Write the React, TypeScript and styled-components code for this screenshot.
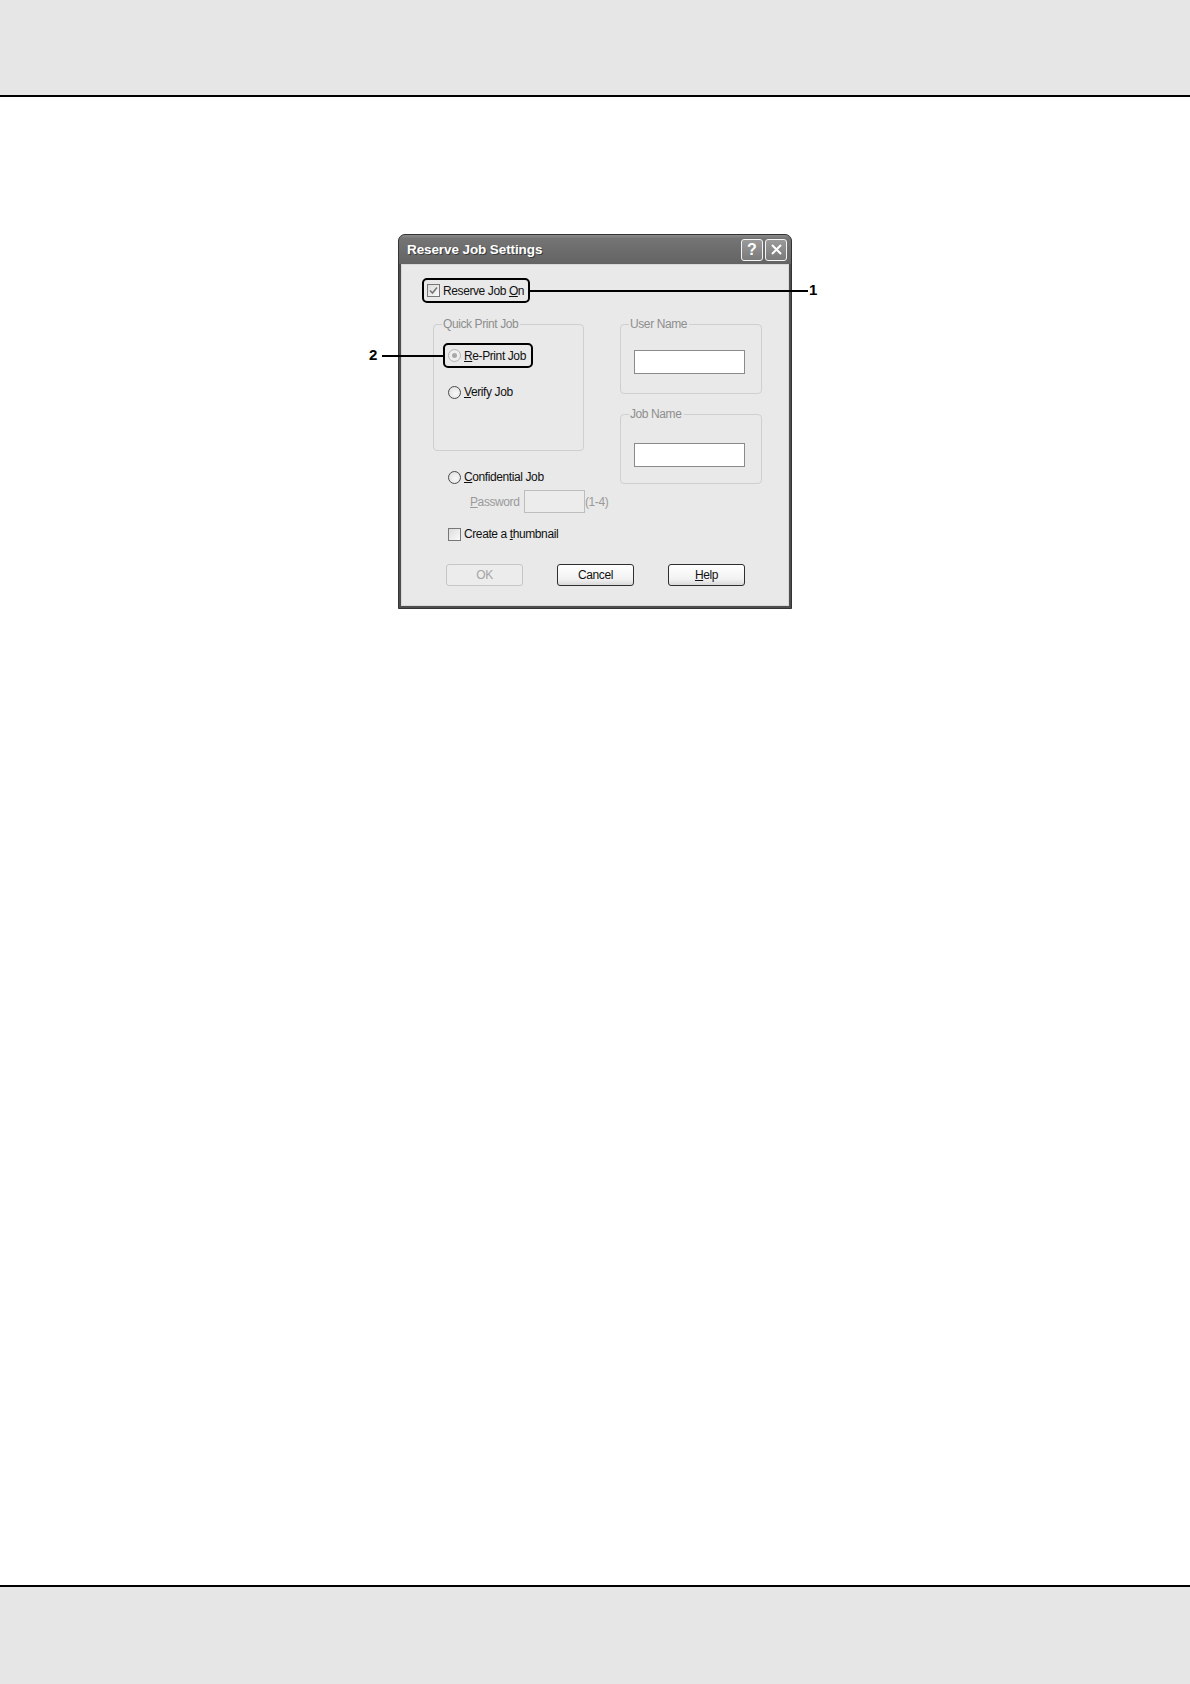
import styled, { createGlobalStyle } from 'styled-components';

const GlobalStyle = createGlobalStyle`
  html, body {
    margin: 0;
    padding: 0;
    background: #ffffff;
  }
  body {
    font-family: "Liberation Sans", Arial, sans-serif;
  }
`;

const Page = styled.div`
  min-height: 1684px;
  display: flex;
  flex-direction: column;
`;

const Band = styled.div<{ $top?: boolean }>`
  height: ${p => (p.$top ? '95px' : '97px')};
  background: #e6e6e6;
  ${p => (p.$top ? 'border-bottom: 2px solid #000;' : 'border-top: 2px solid #000;')}
`;

const Main = styled.main`
  flex: 1;
  display: flex;
  justify-content: center;
  align-items: flex-start;
  padding-top: 137px;
`;

const Figure = styled.div`
  position: relative;
`;

const Dialog = styled.div`
  box-sizing: border-box;
  width: 394px;
  height: 375px;
  display: flex;
  flex-direction: column;
  background: #4e4e4e;
  border: 1px solid #333;
  border-radius: 7px 7px 0 0;
  padding: 0 2px 2px;
  overflow: hidden;
`;

const TitleBar = styled.div`
  height: 29px;
  margin: 0 -2px;
  display: flex;
  align-items: center;
  padding: 0 4px 0 8px;
  background: linear-gradient(to bottom, #8c8c8c 0%, #747474 12%, #6b6b6b 60%, #636363 100%);
`;

const Title = styled.span`
  flex: 1;
  color: #fff;
  font-weight: bold;
  font-size: 13.5px;
  letter-spacing: -0.1px;
  text-shadow: 1px 1px 0 #3c3c3c;
`;

const CapButton = styled.span`
  box-sizing: border-box;
  width: 22px;
  height: 22px;
  margin-left: 2px;
  border: 1px solid #f4f4f4;
  border-radius: 3px;
  background: linear-gradient(to bottom, #9a9a9a, #7a7a7a);
  display: flex;
  align-items: center;
  justify-content: center;
  color: #fff;
  font-size: 16px;
  font-weight: bold;
`;

const Body = styled.div`
  flex: 1;
  background: #e9e9e9;
  border: 1px solid #d8d8d8;
  padding-top: 13px;
  display: flex;
  flex-direction: column;
  color: #111;
  font-size: 12px;
  letter-spacing: -0.4px;
`;

const Callout = styled.div<{ $w: number }>`
  box-sizing: border-box;
  width: ${p => p.$w}px;
  height: 25px;
  border: 2px solid #000;
  border-radius: 5px;
  display: flex;
  align-items: center;
  padding-left: 3px;
`;

const ReserveRow = styled.div`
  margin-left: 20px;
`;

const Columns = styled.div`
  display: grid;
  grid-template-columns: 151px 142px;
  column-gap: 36px;
  margin: 21px 0 0 31px;
  align-items: start;
`;

const Column = styled.div`
  display: flex;
  flex-direction: column;
`;

const Group = styled.div<{ $h: number; $pt: number }>`
  box-sizing: border-box;
  height: ${p => p.$h}px;
  border: 1px solid #cfcfcf;
  border-radius: 4px;
  padding: 0 0 0 9px;
  display: flex;
  flex-direction: column;
  align-items: flex-start;
  & + & {
    margin-top: 20px;
  }
  & > *:nth-child(2) {
    margin-top: ${p => p.$pt}px;
  }
`;

const Legend = styled.span`
  margin: -8px 0 0 -1px;
  padding: 0 2px 0 1px;
  line-height: 14px;
  background: #e9e9e9;
  color: #8e8e8e;
`;

const Choice = styled.label<{ $disabled?: boolean; $indent?: number }>`
  display: flex;
  align-items: center;
  gap: 3px;
  height: 14px;
  line-height: 14px;
  margin-left: ${p => p.$indent ?? 0}px;
  color: ${p => (p.$disabled ? '#9a9a9a' : '#111')};
  white-space: nowrap;
`;

const Radio = styled.span<{ $on?: boolean; $disabled?: boolean }>`
  box-sizing: border-box;
  flex: none;
  width: 13px;
  height: 13px;
  border-radius: 50%;
  border: 1px solid ${p => (p.$disabled ? '#b4b4b4' : '#4a4a4a')};
  background: ${p => (p.$disabled ? '#eeeeee' : 'radial-gradient(circle at 60% 60%, #f8f8f8, #dcdcdc)')};
  display: flex;
  align-items: center;
  justify-content: center;
  &::after {
    content: '';
    display: ${p => (p.$on ? 'block' : 'none')};
    box-sizing: border-box;
    width: 5px;
    height: 5px;
    border-radius: 50%;
    background: ${p => (p.$disabled ? '#a8a8a8' : '#333')};
  }
`;

const Box = styled.span`
  box-sizing: border-box;
  flex: none;
  width: 13px;
  height: 13px;
  border: 1px solid #777;
  background: linear-gradient(135deg, #dcdcdc, #fafafa);
  display: flex;
  align-items: center;
  justify-content: center;
`;

const Verify = styled(Choice)`
  margin-top: 17px;
  margin-left: 5px;
`;

const Confidential = styled(Choice)`
  margin-top: 19px;
`;

const PasswordRow = styled.div`
  display: flex;
  align-items: center;
  margin: 6px 0 0 37px;
  color: #9a9a9a;
  white-space: nowrap;
`;

const PasswordLabel = styled.span`
  flex: none;
  width: 54px;
`;

const Field = styled.span<{ $w: number; $h: number; $disabled?: boolean; $indent?: number }>`
  box-sizing: border-box;
  display: block;
  flex: none;
  width: ${p => p.$w}px;
  height: ${p => p.$h}px;
  border: 1px solid ${p => (p.$disabled ? '#bdbdbd' : '#8a8a8a')};
  background: ${p => (p.$disabled ? '#ececec' : '#fff')};
  margin-left: ${p => p.$indent ?? 0}px;
`;

const Thumbnail = styled(Choice)`
  margin-top: 14px;
`;

const ButtonRow = styled.div`
  display: flex;
  gap: 34px;
  margin: 23px 0 0 44px;
`;

const Button = styled.span<{ $disabled?: boolean }>`
  box-sizing: border-box;
  width: 77px;
  height: 22px;
  border: 1px solid ${p => (p.$disabled ? '#c6c6c6' : '#2e2e2e')};
  border-radius: 3px;
  background: ${p =>
    p.$disabled ? '#ececec' : 'linear-gradient(to bottom, #ffffff 0%, #f2f2f2 70%, #d9d9d9 100%)'};
  color: ${p => (p.$disabled ? '#a4a4a4' : '#111')};
  display: flex;
  align-items: center;
  justify-content: center;
`;

const Leader = styled.div<{ $left: number; $top: number; $w: number }>`
  position: absolute;
  left: ${p => p.$left}px;
  top: ${p => p.$top}px;
  width: ${p => p.$w}px;
  height: 2px;
  background: #000;
`;

const Marker = styled.span<{ $left: number; $top: number }>`
  position: absolute;
  left: ${p => p.$left}px;
  top: ${p => p.$top}px;
  font-size: 15px;
  font-weight: bold;
  line-height: 18px;
  color: #000;
`;

const Check = () => (
  <svg width="9" height="9" viewBox="0 0 9 9">
    <path d="M1 4.5 L3.5 7 L8 1.5" fill="none" stroke="#777" strokeWidth="1.6" />
  </svg>
);

const App = () => {
  return (
    <Page>
      <GlobalStyle />
      <Band $top />
      <Main>
        <Figure>
          <Dialog>
            <TitleBar>
              <Title>Reserve Job Settings</Title>
              <CapButton>?</CapButton>
              <CapButton>
                <svg width="13" height="13" viewBox="0 0 13 13">
                  <path d="M2 2 L11 11 M11 2 L2 11" stroke="#fff" strokeWidth="2" />
                </svg>
              </CapButton>
            </TitleBar>
            <Body>
              <ReserveRow>
                <Callout $w={108}>
                  <Choice>
                    <Box>
                      <Check />
                    </Box>
                    <span>
                      Reserve Job <u>O</u>n
                    </span>
                  </Choice>
                </Callout>
              </ReserveRow>
              <Columns>
                <Column>
                  <Group $h={127} $pt={12}>
                    <Legend>Quick Print Job</Legend>
                    <Callout $w={90}>
                      <Choice>
                        <Radio $on $disabled />
                        <span>
                          <u>R</u>e-Print Job
                        </span>
                      </Choice>
                    </Callout>
                    <Verify>
                      <Radio />
                      <span>
                        <u>V</u>erify Job
                      </span>
                    </Verify>
                  </Group>
                  <Confidential $indent={15}>
                    <Radio />
                    <span>
                      <u>C</u>onfidential Job
                    </span>
                  </Confidential>
                  <PasswordRow>
                    <PasswordLabel>
                      <u>P</u>assword
                    </PasswordLabel>
                    <Field $w={61} $h={23} $disabled />
                    <span>(1-4)</span>
                  </PasswordRow>
                  <Thumbnail $indent={15}>
                    <Box />
                    <span>
                      Create a <u>t</u>humbnail
                    </span>
                  </Thumbnail>
                </Column>
                <Column>
                  <Group $h={70} $pt={19}>
                    <Legend>User Name</Legend>
                    <Field $w={111} $h={24} $indent={4} />
                  </Group>
                  <Group $h={70} $pt={22}>
                    <Legend>Job Name</Legend>
                    <Field $w={111} $h={24} $indent={4} />
                  </Group>
                </Column>
              </Columns>
              <ButtonRow>
                <Button $disabled>OK</Button>
                <Button>Cancel</Button>
                <Button>
                  <span>
                    <u>H</u>elp
                  </span>
                </Button>
              </ButtonRow>
            </Body>
          </Dialog>
          <Leader $left={131} $top={56} $w={279} />
          <Marker $left={411} $top={47}>1</Marker>
          <Leader $left={-16} $top={121} $w={61} />
          <Marker $left={-29} $top={112}>2</Marker>
        </Figure>
      </Main>
      <Band />
    </Page>
  );
};

export default App;
